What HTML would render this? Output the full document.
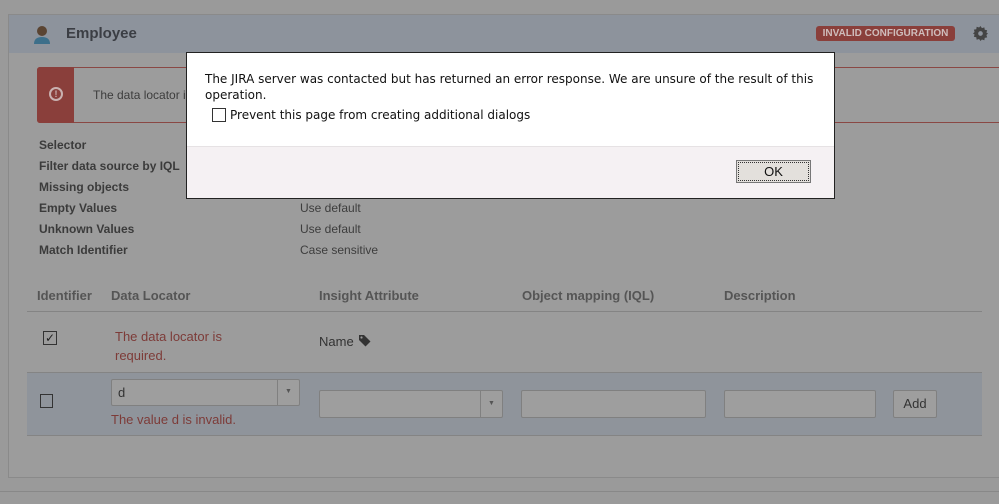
<!DOCTYPE html>
<html><head><meta charset="utf-8"><style>
*{box-sizing:border-box;margin:0;padding:0}
body{width:999px;height:504px;overflow:hidden;background:#9a9a9a;font-family:"Liberation Sans",Arial,sans-serif;position:relative;font-size:13px;color:#3a3a3a}
.panel{position:absolute;left:8px;top:14px;width:995px;height:464px;border:1px solid #8a8a8a;background:#9c9c9c}
.hdr{position:absolute;left:9px;top:15px;width:990px;height:38px;background:#8d939c}
.abs{position:absolute;white-space:nowrap}
.lbl{font-weight:bold;font-size:12px;color:#3b3b3b}
.val{font-size:12px;color:#3d3d3d}
.th{font-weight:bold;font-size:13px;color:#555}
.err{color:#7d3b38;font-size:13px}
.box{position:absolute;border:1px solid #808080;background:#9e9e9e;border-radius:2px}
.dlg{position:absolute;left:186px;top:52px;width:649px;height:147px;background:#fff;border:1px solid #222}
</style></head><body>
<div class="abs" style="left:0;top:491px;width:999px;height:1px;background:#888"></div>
<div class="panel"></div>
<div class="hdr"></div>
<svg class="abs" style="left:33px;top:24px" width="18" height="20" viewBox="0 0 18 20"><circle cx="9" cy="7" r="5" fill="#5a4432"/><path d="M1 20 Q1 13 9 13 Q17 13 17 20Z" fill="#3d6f8a"/></svg>
<div class="abs" style="left:66px;top:25px;font-size:15px;font-weight:bold;color:#3b3e44">Employee</div>
<div class="abs" style="left:816px;top:26px;width:139px;height:15px;background:#8a3f3b;border-radius:3px;color:#cfbdbc;font-size:10px;font-weight:bold;text-align:center;line-height:15px">INVALID CONFIGURATION</div>
<svg class="abs" style="left:973px;top:26px" width="15" height="15" viewBox="0 0 16 16"><path d="M8 0l1.5 2.2 2.6-.8.4 2.6 2.6.5-.8 2.5L16 8l-1.7 1.6.8 2.5-2.6.5-.4 2.6-2.6-.8L8 16l-1.5-2.2-2.6.8-.4-2.6-2.6-.5.8-2.5L0 8l1.7-1.6-.8-2.5 2.6-.5.4-2.6 2.6.8z" fill="#444"/><circle cx="8" cy="8" r="2.5" fill="#8d939c"/></svg>
<div class="abs" style="left:37px;top:67px;width:975px;height:56px;border:1px solid #8a4844;border-radius:3px;background:#9c9c9c"></div>
<div class="abs" style="left:37px;top:67px;width:37px;height:56px;background:#8a3f3b;border-radius:3px 0 0 3px"></div>
<div class="abs" style="left:49px;top:87px;width:14px;height:14px;border:2px solid #c9b1b0;border-radius:50%;color:#c9b1b0;font-size:9px;font-weight:bold;text-align:center;line-height:10px">!</div>
<div class="abs val" style="left:93px;top:88px;font-size:12px">The data locator is</div>
<div class="abs lbl" style="left:39px;top:138px">Selector</div>
<div class="abs lbl" style="left:39px;top:159px">Filter data source by IQL</div>
<div class="abs lbl" style="left:39px;top:180px">Missing objects</div>
<div class="abs lbl" style="left:39px;top:201px">Empty Values</div>
<div class="abs lbl" style="left:39px;top:222px">Unknown Values</div>
<div class="abs lbl" style="left:39px;top:243px">Match Identifier</div>
<div class="abs val" style="left:300px;top:201px">Use default</div>
<div class="abs val" style="left:300px;top:222px">Use default</div>
<div class="abs val" style="left:300px;top:243px">Case sensitive</div>
<div class="abs th" style="left:37px;top:288px">Identifier</div>
<div class="abs th" style="left:111px;top:288px">Data Locator</div>
<div class="abs th" style="left:319px;top:288px">Insight Attribute</div>
<div class="abs th" style="left:522px;top:288px">Object mapping (IQL)</div>
<div class="abs th" style="left:724px;top:288px">Description</div>
<div class="abs" style="left:27px;top:311px;width:955px;height:1px;background:#848484"></div>
<div class="abs" style="left:43px;top:331px;width:14px;height:14px;border:1px solid #333;font-size:12px;line-height:12px;text-align:center;color:#222">✓</div>
<div class="abs err" style="left:115px;top:327px;line-height:19px;white-space:normal;width:140px">The data locator is<br>required.</div>
<div class="abs" style="left:319px;top:334px;font-size:13px;color:#333">Name</div>
<svg class="abs" style="left:358px;top:334px" width="13" height="13" viewBox="0 0 13 13"><path d="M1 1h5l6.5 6.5-5 5L1 6z" fill="#333"/><circle cx="3.5" cy="3.5" r="1.1" fill="#9c9c9c"/></svg>
<div class="abs" style="left:27px;top:372px;width:955px;height:64px;background:#8f949b;border-top:1px solid #848484;border-bottom:1px solid #848484"></div>
<div class="abs" style="left:40px;top:394px;width:13px;height:14px;border:1px solid #333"></div>
<div class="box" style="left:111px;top:379px;width:189px;height:27px"><span style="position:absolute;left:6px;top:5px;color:#333">d</span><span style="position:absolute;right:0;top:0;width:22px;height:25px;border-left:1px solid #808080;font-size:7px;text-align:center;line-height:24px;color:#555">▼</span></div>
<div class="abs err" style="left:111px;top:412px">The value d is invalid.</div>
<div class="box" style="left:319px;top:390px;width:184px;height:28px"><span style="position:absolute;right:0;top:0;width:22px;height:26px;border-left:1px solid #808080;font-size:7px;text-align:center;line-height:26px;color:#555">▼</span></div>
<div class="box" style="left:521px;top:390px;width:185px;height:28px"></div>
<div class="box" style="left:724px;top:390px;width:152px;height:28px"></div>
<div class="box" style="left:893px;top:390px;width:44px;height:28px;text-align:center;line-height:26px;color:#333">Add</div>
<div class="dlg">
<div style="position:absolute;left:18px;top:18px;white-space:nowrap;font-family:'DejaVu Sans',sans-serif;font-size:12px;line-height:16px;color:#111">The JIRA server was contacted but has returned an error response. We are unsure of the result of this<br>operation.</div>
<div style="position:absolute;left:25px;top:55px;width:14px;height:14px;border:1px solid #333"></div>
<div style="position:absolute;left:43px;top:55px;font-family:'DejaVu Sans',sans-serif;font-size:12px;color:#111">Prevent this page from creating additional dialogs</div>
<div style="position:absolute;left:0;top:93px;width:647px;height:52px;background:#f5f1f3;border-top:1px solid #e6e2e4"></div>
<div style="position:absolute;left:549px;top:107px;width:75px;height:23px;background:#e3e0dc;border:1px solid #777;outline:1px dotted #333;outline-offset:-3px;text-align:center;line-height:21px;font-size:13px;color:#111">OK</div>
</div>
</body></html>
